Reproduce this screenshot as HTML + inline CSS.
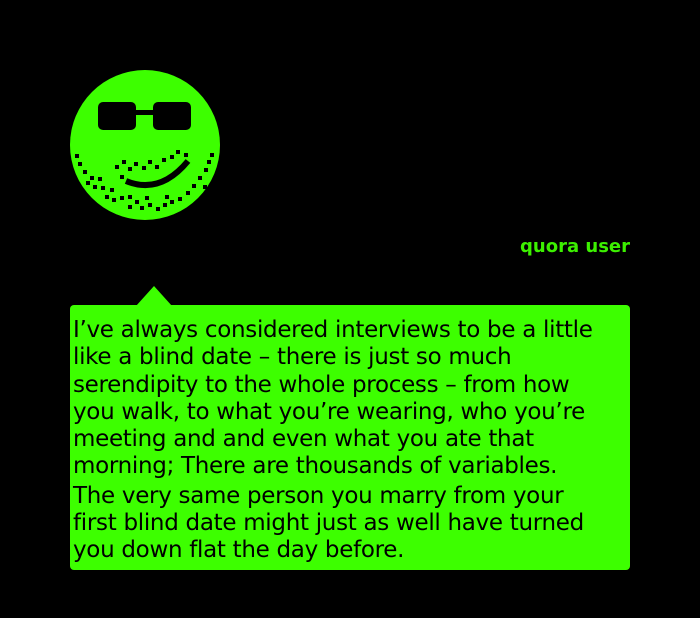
<!DOCTYPE html>
<html><head><style>
html,body{margin:0;padding:0;background:#000;width:700px;height:618px;overflow:hidden}
.name{position:absolute;right:70px;top:236px;font:bold 18px "DejaVu Sans","Liberation Sans",sans-serif;color:#3cf000}
.bubble{position:absolute;left:70px;top:305px;width:560px;height:265px;background:#3dff00;border-radius:4px;box-sizing:border-box;padding:12px 0 0 3px;font:23px/27.3px "DejaVu Sans","Liberation Sans",sans-serif;color:#000;letter-spacing:-0.3px;white-space:nowrap}
.bubble p{margin:0 0 2px 0}
.arrow{position:absolute;left:136px;top:286px;width:0;height:0;border-left:18px solid transparent;border-right:18px solid transparent;border-bottom:20px solid #3dff00}
</style></head><body>
<svg width="700" height="618" style="position:absolute;left:0;top:0">
<circle cx="145" cy="145" r="75" fill="#3dff00"/>
<rect x="98" y="102" width="38" height="28" rx="5" fill="#000"/>
<rect x="153" y="102" width="38" height="28" rx="5" fill="#000"/>
<rect x="134" y="110" width="21" height="5" fill="#000"/>
<path d="M126 181 Q160 195 188 161" stroke="#000" stroke-width="6" fill="none"/>
<g fill="#000">
<rect x="75" y="154" width="4" height="4"/><rect x="78" y="162" width="4" height="4"/><rect x="83" y="170" width="4" height="4"/><rect x="90" y="176" width="4" height="4"/><rect x="98" y="177" width="4" height="4"/><rect x="86" y="181" width="4" height="4"/><rect x="93" y="185" width="4" height="4"/><rect x="101" y="186" width="4" height="4"/><rect x="105" y="195" width="4" height="4"/><rect x="112" y="198" width="4" height="4"/><rect x="120" y="196" width="4" height="4"/><rect x="128" y="195" width="4" height="4"/><rect x="135" y="200" width="4" height="4"/><rect x="128" y="205" width="4" height="4"/><rect x="140" y="206" width="4" height="4"/><rect x="148" y="203" width="4" height="4"/><rect x="156" y="207" width="4" height="4"/><rect x="163" y="203" width="4" height="4"/><rect x="170" y="200" width="4" height="4"/><rect x="178" y="197" width="4" height="4"/><rect x="186" y="191" width="4" height="4"/><rect x="192" y="184" width="4" height="4"/><rect x="198" y="176" width="4" height="4"/><rect x="204" y="168" width="4" height="4"/><rect x="207" y="160" width="4" height="4"/><rect x="210" y="153" width="4" height="4"/><rect x="203" y="185" width="4" height="4"/><rect x="115" y="165" width="4" height="4"/><rect x="122" y="160" width="4" height="4"/><rect x="128" y="167" width="4" height="4"/><rect x="134" y="162" width="4" height="4"/><rect x="142" y="166" width="4" height="4"/><rect x="148" y="160" width="4" height="4"/><rect x="155" y="165" width="4" height="4"/><rect x="162" y="158" width="4" height="4"/><rect x="170" y="155" width="4" height="4"/><rect x="176" y="150" width="4" height="4"/><rect x="184" y="153" width="4" height="4"/><rect x="120" y="175" width="4" height="4"/><rect x="110" y="188" width="4" height="4"/><rect x="145" y="196" width="4" height="4"/><rect x="165" y="195" width="4" height="4"/>
</g>
</svg>
<div class="name">quora user</div>
<div class="arrow"></div>
<div class="bubble">
<p>I’ve always considered interviews to be a little<br>like a blind date – there is just so much<br>serendipity to the whole process – from how<br>you walk, to what you’re wearing, who you’re<br>meeting and and even what you ate that<br>morning; There are thousands of variables.</p>
<p>The very same person you marry from your<br>first blind date might just as well have turned<br>you down flat the day before.</p>
</div>
</body></html>
